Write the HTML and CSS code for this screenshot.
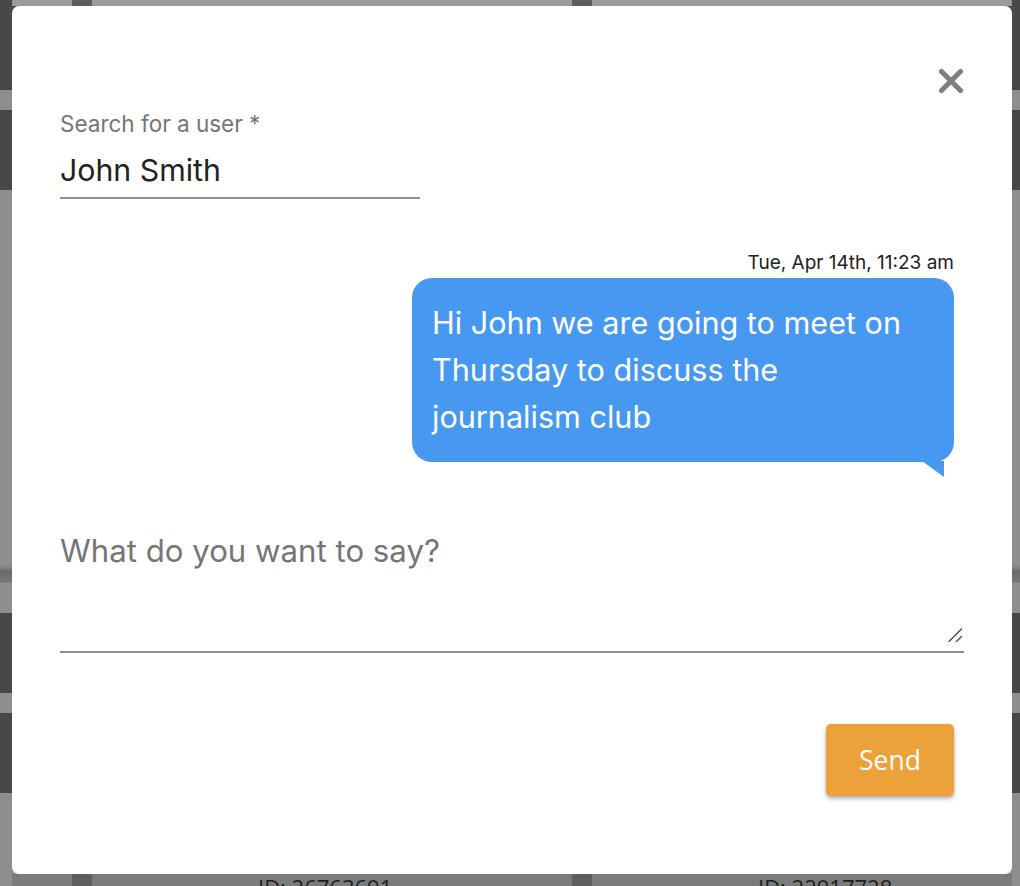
FILE: index.html
```html
<!DOCTYPE html>
<html lang="en">
<head>
<meta charset="utf-8">
<title>New message</title>
<link rel="stylesheet" href="styles.css">
</head>
<body>
<div class="backdrop">
  <div class="bd-top"></div>
  <div class="bd-mid"></div>
  <div class="bd-bottom">
    <span class="bd-id">ID: 26763691</span>
    <span class="bd-id">ID: 22917728</span>
  </div>
</div>

<div class="modal" role="dialog" aria-label="Send a message">
  <div class="modal-head">
    <button class="close-btn" aria-label="Close">
      <svg width="26" height="26" viewBox="0 0 26 26"><path d="M3.5 3.5 L22.5 22.5 M22.5 3.5 L3.5 22.5" stroke="#808080" stroke-width="5.2" stroke-linecap="round" fill="none"/></svg>
    </button>
  </div>

  <div class="field">
    <div class="field-label">Search for a user *</div>
    <div class="field-input">John Smith</div>
  </div>

  <div class="thread">
    <div class="msg-time">Tue, Apr 14th, 11:23 am</div>
    <div class="bubble">Hi John we are going to meet on Thursday to discuss the journalism club</div>
  </div>

  <div class="compose">
    <div class="compose-text">What do you want to say?</div>
    <svg class="resize" width="14" height="14" viewBox="0 0 14 14"><path d="M0.5 14 L14 0.5 M8 14 L14 8" stroke="#4a4a4a" stroke-width="1.4" fill="none"/></svg>
  </div>

  <div class="actions">
    <button class="send-btn">Send</button>
  </div>
</div>
</body>
</html>
```
FILE: styles.css
```css
* { box-sizing: border-box; }
html, body { margin: 0; padding: 0; }
body {
  width: 1020px;
  height: 886px;
  overflow: hidden;
  font-family: Inter, "Noto Sans", sans-serif;
  background: #8e8e8e;
}

.backdrop {
  height: 886px;
  display: flex;
  flex-direction: column;
}
.bd-top {
  height: 6px;
  background: linear-gradient(to right,
    #484848 0, #484848 12px, #9b9b9b 12px, #9b9b9b 72px,
    #5e5e5e 72px, #5e5e5e 92px, #9b9b9b 92px, #9b9b9b 572px,
    #5e5e5e 572px, #5e5e5e 592px, #9b9b9b 592px, #9b9b9b 1012px,
    #484848 1012px);
}
.bd-mid {
  flex: 1;
  background: linear-gradient(to bottom,
    #484848 0, #484848 84px, #8e8e8e 84px, #8e8e8e 104px,
    #484848 104px, #484848 184px, #8e8e8e 184px, #8e8e8e 559px,
    #6a6a6a 566px, #7a7a7a 577px, #8e8e8e 577px, #8e8e8e 607px,
    #484848 607px, #484848 687px, #8e8e8e 687px, #8e8e8e 707px,
    #484848 707px, #484848 787px, #8e8e8e 787px);
}
.bd-bottom {
  height: 12px;
  display: flex;
  overflow: hidden;
  background: linear-gradient(to right,
    #8e8e8e 0, #8e8e8e 12px, #7b7b7b 12px, #7b7b7b 72px,
    #5e5e5e 72px, #5e5e5e 92px, #7b7b7b 92px, #7b7b7b 572px,
    #5e5e5e 572px, #5e5e5e 592px, #7b7b7b 592px, #7b7b7b 1012px,
    #8e8e8e 1012px);
}
.bd-id {
  width: 500px;
  padding-left: 258px;
  font-family: "Open Sans", sans-serif;
  font-size: 22px;
  line-height: 26px;
  color: #1e1e1e;
}

.modal {
  position: fixed;
  left: 12px;
  top: 6px;
  width: 1000px;
  height: 868px;
  padding: 62px 48px 0 48px;
  background: #ffffff;
  border-radius: 7px;
  display: flex;
  flex-direction: column;
}

.modal-head {
  display: flex;
  justify-content: flex-end;
}
.close-btn {
  margin: 0;
  padding: 0;
  border: 0;
  background: transparent;
  width: 26px;
  height: 26px;
  display: block;
  cursor: pointer;
}
.close-btn svg { display: block; }

.field {
  width: 360px;
  margin-top: 16px;
  border-bottom: 2px solid #8f8f8f;
}
.field-label {
  font-size: 22.5px;
  line-height: 27px;
  color: #757575;
}
.field-input {
  margin-top: 15px;
  padding-bottom: 9px;
  font-size: 30.3px;
  line-height: 36px;
  color: #222222;
}

.thread {
  margin-top: 53px;
  margin-right: 10px;
  display: flex;
  flex-direction: column;
  align-items: flex-end;
}
.msg-time {
  font-size: 19px;
  line-height: 22px;
  color: #222222;
}
.bubble {
  position: relative;
  margin-top: 4px;
  width: 542px;
  padding: 21px 40px 22px 20px;
  background: #4798f0;
  color: #ffffff;
  border-radius: 20px;
  font-size: 30.6px;
  line-height: 47px;
}
.bubble::after {
  content: "";
  position: absolute;
  right: 10px;
  bottom: -15px;
  width: 22px;
  height: 16px;
  background: #4798f0;
  clip-path: polygon(0 0, 100% 0, 100% 100%);
}

.compose {
  margin-top: 70px;
  height: 121px;
  padding-bottom: 9px;
  border-bottom: 2px solid #8f8f8f;
  display: flex;
  flex-direction: column;
  justify-content: space-between;
}
.compose-text {
  font-size: 31.2px;
  line-height: 38px;
  color: #757575;
}
.resize {
  display: block;
  align-self: flex-end;
  margin-right: 2px;
}

.actions {
  margin-top: 71px;
  margin-right: 10px;
  display: flex;
  justify-content: flex-end;
}
.send-btn {
  width: 128px;
  height: 72px;
  padding: 0;
  border: 0;
  border-radius: 5px;
  background: #eca23b;
  color: #ffffff;
  font-family: "Open Sans", sans-serif;
  font-size: 26.5px;
  box-shadow: 0 3px 5px rgba(0,0,0,0.25), 0 1px 2px rgba(0,0,0,0.15);
  cursor: pointer;
}
```
